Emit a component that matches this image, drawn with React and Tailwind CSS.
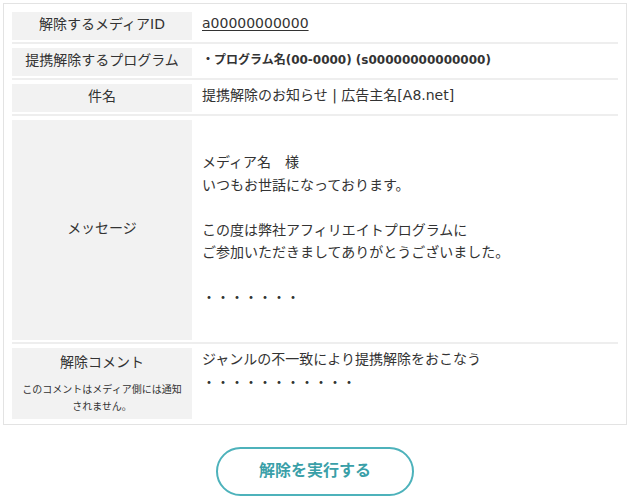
import React from "react";

const font = { fontFamily: '"DejaVu Sans", "Noto Sans CJK JP", sans-serif' };

function Row({ label, children, last, labelClass = "", valueClass = "" }) {
  return (
    <div
      className={`flex pt-1 ${last ? "" : "pb-[2px] border-b-2 border-[#eeeeee]"}`}
    >
      <div
        className={`w-[180px] shrink-0 bg-[#f2f2f2] min-h-[28px] pb-[3px] flex items-center justify-center text-center ${labelClass}`}
      >
        {label}
      </div>
      <div className={`flex-1 pl-[10px] leading-[22.5px] ${valueClass}`}>
        {children}
      </div>
    </div>
  );
}

export default function App() {
  return (
    <div className="bg-white w-[634px] h-[499px] text-[14px] text-[#333333]" style={font}>
      <div className="ml-[3px] mt-[3px] w-[624px] border border-[#e3e3e3] pt-1 pb-[5px] px-2">
        {/* メディアID */}
        <Row label="解除するメディアID">
          <a href="#" className="underline underline-offset-2">a00000000000</a>
        </Row>

        {/* プログラム */}
        <Row label="提携解除するプログラム" valueClass="flex items-center pb-[3px]">
          <span className="font-bold text-[12px]">・プログラム名(00-0000) (s00000000000000)</span>
        </Row>

        {/* 件名 */}
        <Row label="件名">提携解除のお知らせ | 広告主名[A8.net]</Row>

        {/* メッセージ */}
        <Row label="メッセージ" valueClass="py-[31.25px]">
          <div>メディア名　様</div>
          <div>いつもお世話になっております。</div>
          <div>&nbsp;</div>
          <div>この度は弊社アフィリエイトプログラムに</div>
          <div>ご参加いただきましてありがとうございました。</div>
          <div>&nbsp;</div>
          <div>・・・・・・・</div>
        </Row>

        {/* コメント */}
        <Row
          last
          label={
            <div className="pt-[4px] pb-[1px]">
              <div className="leading-[20px]">解除コメント</div>
              <div className="mt-[9px] text-[10px] leading-[17px] px-2">
                このコメントはメディア側には通知
                <br />
                されません。
              </div>
            </div>
          }
        >
          <div>ジャンルの不一致により提携解除をおこなう</div>
          <div>・・・・・・・・・・・</div>
        </Row>
      </div>

      <div className="w-[630px] flex justify-center mt-[22px]">
        <button
          type="button"
          className="w-[198px] h-[49px] rounded-full border-2 border-[#4db2bb] text-[#3a9fa8] font-bold text-[16px] pb-[2px]"
        >
          解除を実行する
        </button>
      </div>
    </div>
  );
}
